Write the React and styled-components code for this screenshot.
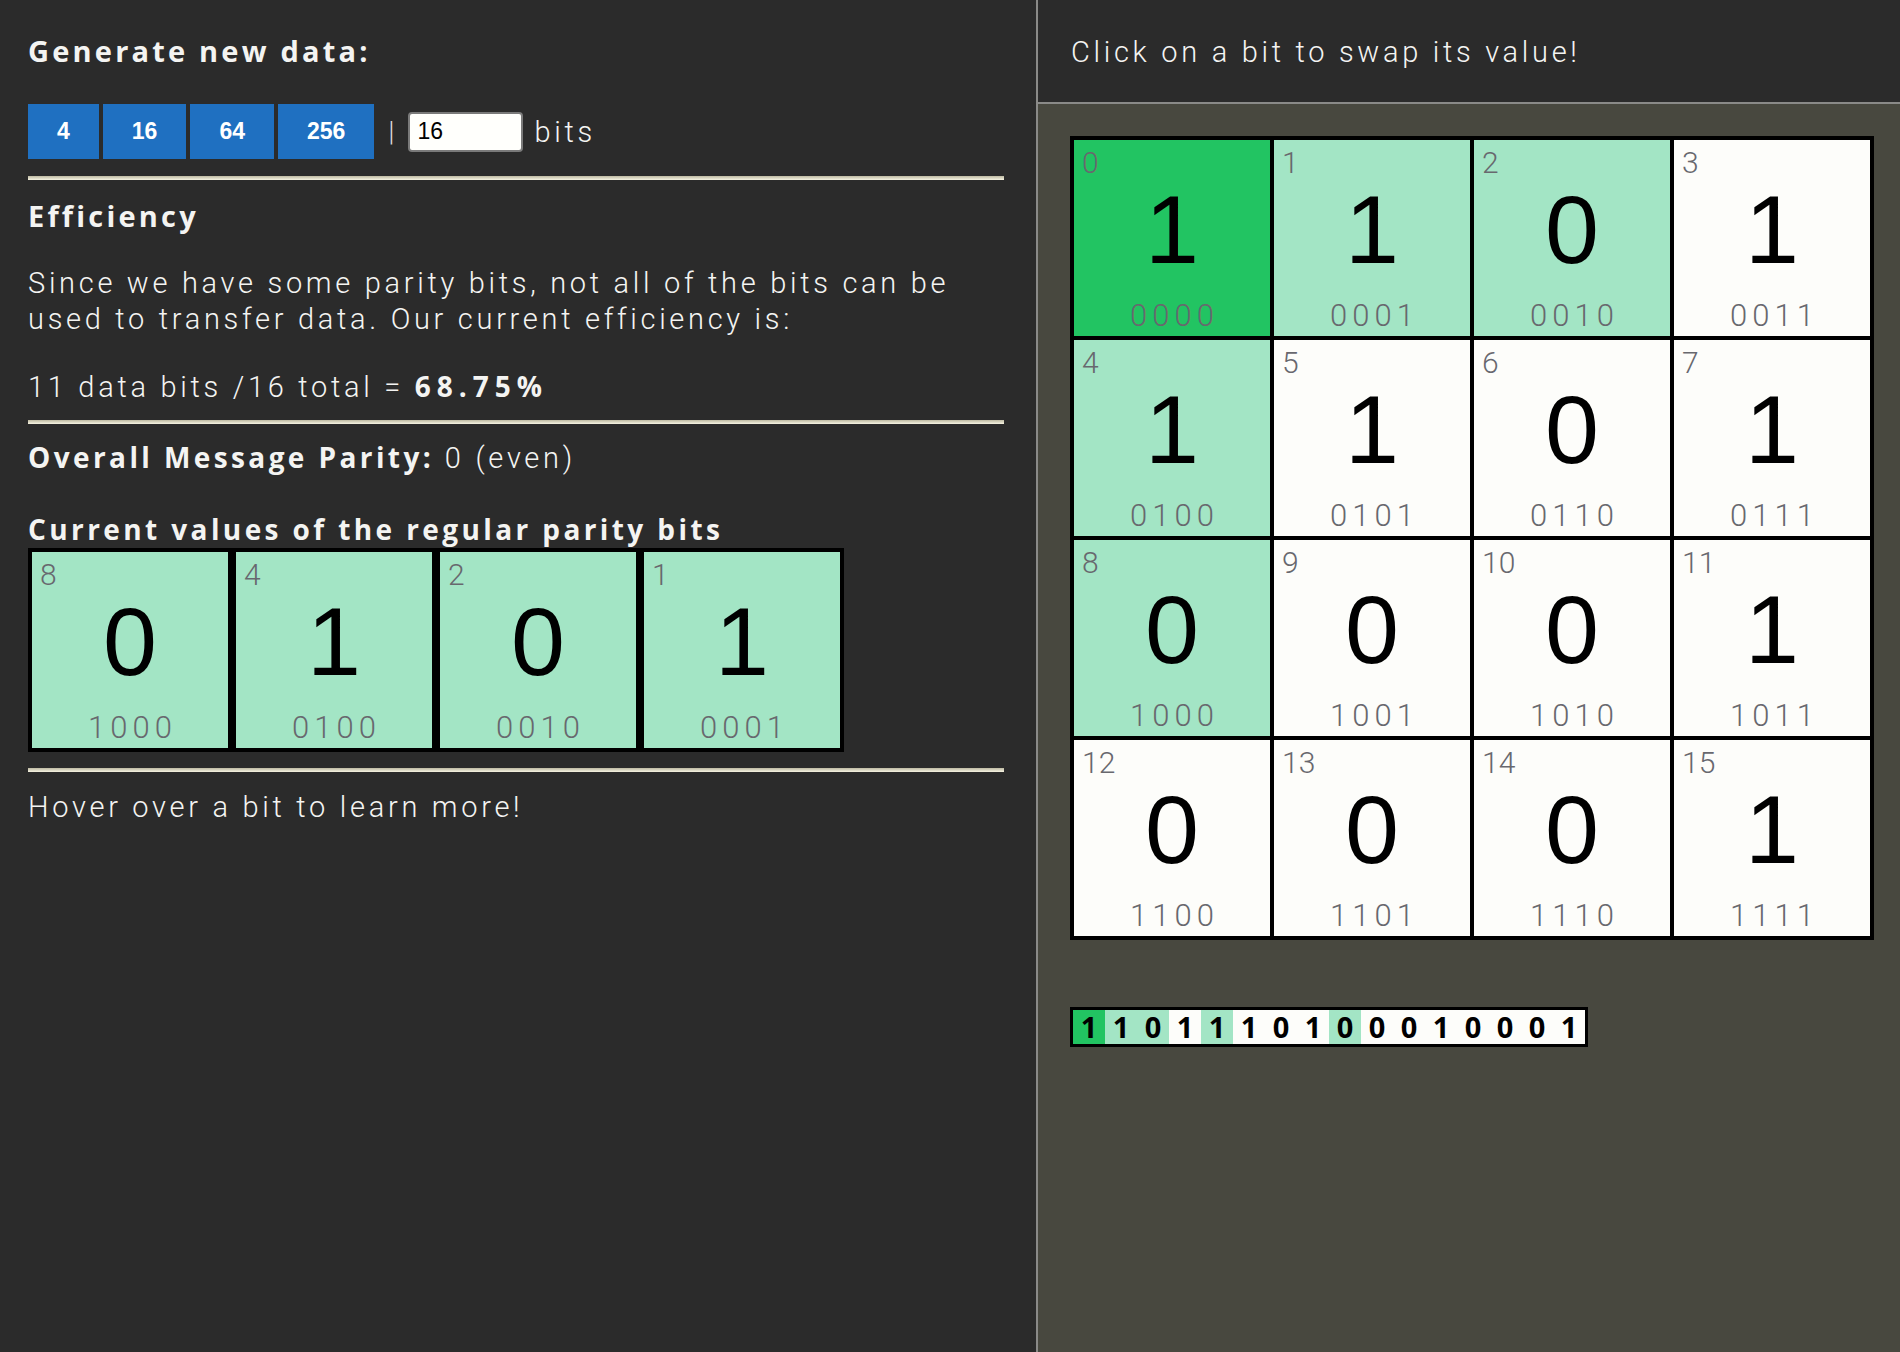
import React from 'react'
import styled, { createGlobalStyle } from 'styled-components'

const GlobalStyle = createGlobalStyle`
  body {
    margin: 0;
    background: #2b2b2b;
    font-family: Roboto, "Open Sans", sans-serif;
    color: #f4f4f2;
  }
`

const BITS = [1, 1, 0, 1, 1, 1, 0, 1, 0, 0, 0, 1, 0, 0, 0, 1]
const PARITY = [8, 4, 2, 1]

const COLORS = {
  overall: '#22c462',
  parity: '#a3e5c5',
  data: '#fdfdfa',
}

const kindOf = (i) => (i === 0 ? 'overall' : (i & (i - 1)) === 0 ? 'parity' : 'data')
const toBin = (i) => i.toString(2).padStart(4, '0')

const BitCell = ({ index, value, kind, boxed }) => (
  <StyledCell $kind={kind} $boxed={boxed}>
    <StyledIndex>{index}</StyledIndex>
    <StyledDigit>{value}</StyledDigit>
    <StyledBinary>{toBin(index)}</StyledBinary>
  </StyledCell>
)

export default function App() {
  const parityValue = (p) => BITS[p]
  const dataBits = 11
  return (
    <>
      <GlobalStyle />
      <StyledPage>
        <StyledLeft>
          <StyledHeading>Generate new data:</StyledHeading>
          <StyledControls>
            <StyledButtons>
              {[4, 16, 64, 256].map((n) => (
                <StyledButton key={n}>{n}</StyledButton>
              ))}
            </StyledButtons>
            <StyledPipe>|</StyledPipe>
            <StyledInput defaultValue="16" />
            <StyledText as="span">bits</StyledText>
          </StyledControls>
          <StyledHr />
          <StyledHeading $top={18}>Efficiency</StyledHeading>
          <StyledText $top={31}>
            Since we have some parity bits, not all of the bits can be used to transfer data. Our
            current efficiency is:
          </StyledText>
          <StyledText $top={32}>
            {dataBits} data bits /{BITS.length} total = <b className="wide">68.75%</b>
          </StyledText>
          <StyledHr $top={15} />
          <StyledText $top={16}>
            <b>Overall Message Parity:</b> 0 (even)
          </StyledText>
          <StyledText $top={36}>
            <b>Current values of the regular parity bits</b>
          </StyledText>
          <StyledParityRow>
            {PARITY.map((p) => (
              <BitCell key={p} index={p} value={parityValue(p)} kind="parity" boxed />
            ))}
          </StyledParityRow>
          <StyledHr $top={16} />
          <StyledText $top={17}>Hover over a bit to learn more!</StyledText>
        </StyledLeft>

        <StyledRight>
          <StyledRightHeader>
            <StyledText>Click on a bit to swap its value!</StyledText>
          </StyledRightHeader>
          <StyledRightBody>
            <StyledGrid>
              {BITS.map((b, i) => (
                <BitCell key={i} index={i} value={b} kind={kindOf(i)} />
              ))}
            </StyledGrid>
            <StyledStrip>
              {BITS.map((b, i) => (
                <StyledStripBit key={i} $kind={kindOf(i)}>
                  {b}
                </StyledStripBit>
              ))}
            </StyledStrip>
          </StyledRightBody>
        </StyledRight>
      </StyledPage>
    </>
  )
}

const StyledPage = styled.div`
display: flex;
min-height: 1352px;
`

const StyledLeft = styled.div`
width: 1038px;
flex-shrink: 0;
box-sizing: border-box;
padding: 33px 32px 0 28px;
border-right: 2px solid #8a8a88;
background: #2b2b2b;
`

const StyledHeading = styled.div`
margin-top: ${(p) => p.$top || 0}px;
font-family: "Open Sans", Roboto, sans-serif;
font-size: 29px;
line-height: 36px;
font-weight: 700;
letter-spacing: 3.2px;
`

const StyledText = styled.div`
margin-top: ${(p) => p.$top || 0}px;
font-size: 29px;
line-height: 36px;
font-weight: 300;
letter-spacing: 3.7px;

b {
  font-family: "Open Sans", Roboto, sans-serif;
  font-size: 28px;
  line-height: 1;
  font-weight: 700;
  letter-spacing: 3.4px;
}

b.wide {
  letter-spacing: 6px;
}
`

const StyledControls = styled.div`
display: flex;
align-items: center;
margin-top: 35px;
height: 55px;
`

const StyledButtons = styled.div`
display: flex;
gap: 4px;
height: 100%;
`

const StyledButton = styled.button`
border: none;
padding: 0 29px;
height: 55px;
background: #1f70c1;
color: #ffffff;
font-family: "Liberation Sans", Arial, sans-serif;
font-weight: 700;
font-size: 23px;
cursor: pointer;
`

const StyledPipe = styled.span`
margin: 0 13px 0 14px;
font-size: 28px;
font-weight: 300;
color: #dddddd;
`

const StyledInput = styled.input`
box-sizing: border-box;
width: 115px;
height: 40px;
margin-right: 12px;
padding: 0 8px;
border: 2px solid #7a7a7a;
border-radius: 4px;
background: #fffffc;
font-family: "Liberation Sans", Arial, sans-serif;
font-size: 23px;
color: #000000;
`

const StyledHr = styled.div`
margin-top: ${(p) => p.$top || 17}px;
height: 4px;
background: linear-gradient(#bdb9a2, #f6f3e2);
`

const StyledParityRow = styled.div`
display: flex;
`

const StyledCell = styled.div`
display: flex;
flex-direction: column;
box-sizing: border-box;
width: ${(p) => (p.$boxed ? 204 : 196)}px;
height: ${(p) => (p.$boxed ? 204 : 196)}px;
border: ${(p) => (p.$boxed ? '4px solid #000' : 'none')};
background: ${(p) => COLORS[p.$kind]};
cursor: pointer;
`

const StyledIndex = styled.div`
padding: 6px 0 0 8px;
height: 34px;
font-size: 30px;
line-height: 34px;
font-weight: 300;
color: #68686e;
`

const StyledDigit = styled.div`
margin-top: 2px;
height: 96px;
text-align: center;
font-family: "Liberation Sans", Arial, sans-serif;
font-size: 97px;
line-height: 96px;
color: #000000;
`

const StyledBinary = styled.div`
margin-top: 21px;
height: 34px;
text-align: center;
font-size: 31px;
line-height: 34px;
font-weight: 300;
letter-spacing: 5px;
text-indent: 5px;
color: #68686e;
`

const StyledRight = styled.div`
flex: 1;
display: flex;
flex-direction: column;
`

const StyledRightHeader = styled.div`
box-sizing: border-box;
height: 104px;
padding: 34px 0 0 33px;
border-bottom: 2px solid #8a8a88;
background: #2b2b2b;
`

const StyledRightBody = styled.div`
flex: 1;
padding: 32px 0 0 32px;
background: #48483f;
`

const StyledGrid = styled.div`
display: grid;
grid-template-columns: repeat(4, 196px);
gap: 4px;
padding: 4px;
width: max-content;
background: #000000;
`

const StyledStrip = styled.div`
display: flex;
width: max-content;
margin-top: 67px;
border: 3px solid #000000;
`

const StyledStripBit = styled.div`
width: 32px;
height: 34px;
text-align: center;
font-family: "Open Sans", Roboto, sans-serif;
font-size: 29px;
line-height: 34px;
font-weight: 700;
color: #000000;
background: ${(p) => COLORS[p.$kind]};
`
